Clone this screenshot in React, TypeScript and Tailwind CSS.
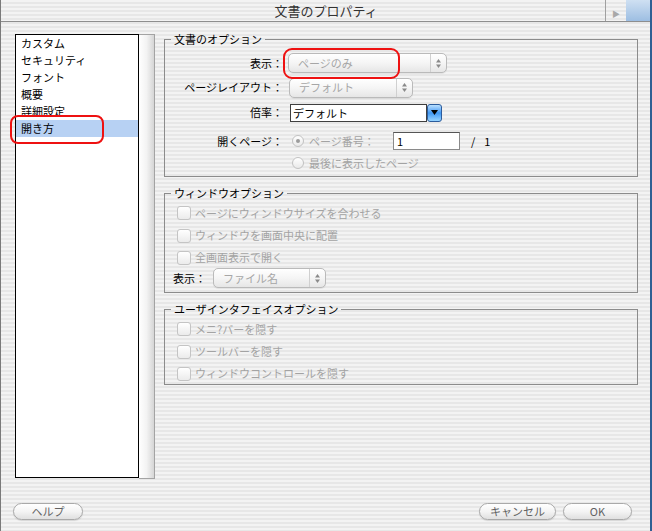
import React from "react";

const STRIPE =
  "bg-[repeating-linear-gradient(180deg,#f3f3f3_0px,#f3f3f3_2px,#e7e7e7_2px,#e7e7e7_4px)]";

function UpDown() {
  return (
    <svg width="7" height="11" viewBox="0 0 7 11">
      <path d="M3.5 1 L6 4.5 H1 Z" fill="#8a8a8a" />
      <path d="M3.5 10 L6 6.5 H1 Z" fill="#8a8a8a" />
    </svg>
  );
}

function Popup({ className, text }: { className: string; text: string }) {
  return (
    <div
      className={`${className} h-[20px] rounded-[5px] border border-[#bababa] bg-gradient-to-b from-[#ffffff] via-[#f5f5f5] to-[#e6e6e6] flex items-center shadow-[0_1px_0_rgba(0,0,0,0.06)]`}
    >
      <span className="flex-1 pl-[9px] text-[#a6a6a6] leading-none">{text}</span>
      <span className="w-[16px] h-full border-l border-[#d0d0d0] flex items-center justify-center">
        <UpDown />
      </span>
    </div>
  );
}

function Check({ label }: { label: string }) {
  return (
    <div className="flex items-center">
      <span className="w-[14px] h-[14px] rounded-[3px] border border-[#c4c4c4] bg-gradient-to-b from-white to-[#ebebeb]" />
      <span className="ml-[4px] text-[#a3a3a3]">{label}</span>
    </div>
  );
}

function Radio({ on }: { on?: boolean }) {
  return (
    <span className="w-[12px] h-[12px] rounded-full border border-[#c2c2c2] bg-gradient-to-b from-white to-[#e9e9e9] flex items-center justify-center shrink-0">
      {on && <span className="w-[4px] h-[4px] rounded-full bg-[#9c9c9c]" />}
    </span>
  );
}

function Btn({ className, text }: { className: string; text: string }) {
  return (
    <div
      className={`${className} h-[17px] rounded-full border border-[#a9a9a9] bg-gradient-to-b from-white via-[#f4f4f4] to-[#e0e0e0] flex items-center justify-center text-[#626262] text-[11px] shadow-[0_1px_1px_rgba(0,0,0,0.12)]`}
    >
      {text}
    </div>
  );
}

const items = ["カスタム", "セキュリティ", "フォント", "概要", "詳細設定", "開き方"];

export default function App() {
  return (
    <div className="relative w-[652px] h-[531px] overflow-hidden bg-[#2f5f93] font-['Noto_Sans_CJK_JP','Noto_Sans',sans-serif] text-[11px] text-black">
      <div className={`w-[650px] h-full flex flex-col border-l border-[#7a7a7a] ${STRIPE}`}>
        {/* title bar */}
        <div className="h-[22px] flex border-b border-[#8e8e8e]">
          <div className="flex-1 border-r border-[#a0a0a0] flex items-center justify-center pl-[46px] text-[13px] text-[#333] leading-none">
            文書のプロパティ
          </div>
          <div className="w-[20px] flex items-end justify-center pb-[3px] text-[8px] text-[#a8a8a8] leading-none">
            ▶
          </div>
          <div className="w-[24px] bg-gradient-to-b from-[#cfe0f2] to-[#9dbee2]" />
        </div>

        {/* body */}
        <div className="flex-1 flex flex-col pl-[14px] pr-[12px] pt-[12px]">
          <div className="h-[444px] flex">
            <div className="w-[124px] h-full border border-black bg-white">
              {items.map((t, i) => (
                <div
                  key={t}
                  className={`h-[17px] leading-[17px] pl-[5px] ${i === 5 ? "bg-[#b7d1f3]" : ""}`}
                >
                  {t}
                </div>
              ))}
            </div>
            <div className="w-[16px] h-[445px] border-t border-r border-b border-[#a3a3a3] bg-gradient-to-r from-white via-[#f3f3f3] to-[#d6d6d6]" />

            <div className="flex-1 ml-[9px] flex flex-col">
              {/* group 1 */}
              <fieldset className="border border-[#8c8c8c] pt-[7px] pb-[7px] min-w-0">
                <legend className="ml-[6px] px-[3px] leading-[10px]">文書のオプション</legend>
                <div className="h-[24px] flex items-center">
                  <span className="w-[118px] text-right">表示：</span>
                  <Popup className="ml-[5px] w-[159px]" text="ページのみ" />
                </div>
                <div className="h-[25px] flex items-center">
                  <span className="w-[118px] text-right">ページレイアウト：</span>
                  <Popup className="ml-[6px] w-[124px]" text="デフォルト" />
                </div>
                <div className="h-[25px] flex items-center">
                  <span className="w-[118px] text-right">倍率：</span>
                  <div className="ml-[7px] flex items-center">
                    <div className="w-[137px] h-[18px] border border-[#3f3f3f] bg-white pl-[2px] leading-[16px]">
                      デフォルト
                    </div>
                    <div className="w-[15px] h-[18px] rounded-[3px] border border-[#2c5c9c] bg-gradient-to-b from-[#b9e0ff] via-[#3f97f2] to-[#97d4ff] flex items-center justify-center">
                      <svg width="7" height="5" viewBox="0 0 7 5">
                        <path d="M0 0 H7 L3.5 5 Z" fill="#000" />
                      </svg>
                    </div>
                  </div>
                </div>
                <div className="h-[32px] flex items-center">
                  <span className="w-[118px] text-right">開くページ：</span>
                  <div className="ml-[5px] w-[105px] flex items-center">
                    <span className="ml-[4px]" />
                    <Radio on />
                    <span className="ml-[5px] text-[#a3a3a3]">ページ番号：</span>
                  </div>
                  <div className="w-[67px] h-[18px] border border-[#8a8a8a] border-t-[#555] bg-white pl-[3px] leading-[16px]">
                    1
                  </div>
                  <span className="ml-[11px]">/</span>
                  <span className="ml-[9px]">1</span>
                </div>
                <div className="h-[12px] flex items-center">
                  <span className="w-[118px]" />
                  <div className="ml-[5px] flex items-center">
                    <span className="ml-[4px]" />
                    <Radio />
                    <span className="ml-[5px] text-[#a3a3a3]">最後に表示したページ</span>
                  </div>
                </div>
              </fieldset>

              {/* group 2 */}
              <fieldset className="mt-[11px] border border-[#8c8c8c] pt-[4px] pb-[4px] min-w-0">
                <legend className="ml-[6px] px-[3px] leading-[10px]">ウィンドウオプション</legend>
                <div className="h-[22px] flex items-center pl-[12px]">
                  <Check label="ページにウィンドウサイズを合わせる" />
                </div>
                <div className="h-[23px] flex items-center pl-[12px]">
                  <Check label="ウィンドウを画面中央に配置" />
                </div>
                <div className="h-[21px] flex items-center pl-[12px]">
                  <Check label="全画面表示で開く" />
                </div>
                <div className="h-[20px] flex items-center pl-[8px]">
                  <span>表示：</span>
                  <Popup className="ml-[7px] w-[113px]" text="ファイル名" />
                </div>
              </fieldset>

              {/* group 3 */}
              <fieldset className="mt-[11px] border border-[#8c8c8c] pt-[4px] min-w-0">
                <legend className="ml-[6px] px-[3px] leading-[10px]">ユーザインタフェイスオプション</legend>
                <div className="h-[22px] flex items-center pl-[12px]">
                  <Check label="メニ?バーを隠す" />
                </div>
                <div className="h-[23px] flex items-center pl-[12px]">
                  <Check label="ツールバーを隠す" />
                </div>
                <div className="h-[21px] flex items-center pl-[12px]">
                  <Check label="ウィンドウコントロールを隠す" />
                </div>
              </fieldset>
            </div>
          </div>

          {/* buttons */}
          <div className="mt-[25px] h-[17px] flex items-center pr-[6px]">
            <Btn className="-ml-[2px] w-[70px]" text="ヘルプ" />
            <div className="flex-1" />
            <Btn className="w-[77px]" text="キャンセル" />
            <Btn className="ml-[7px] w-[69px]" text="OK" />
          </div>
        </div>
      </div>

      {/* red annotation marks */}
      <div className="absolute left-[10px] top-[115px] w-[94px] h-[29px] border-2 border-[#ee1111] rounded-[8px]" />
      <div className="absolute left-[283px] top-[48px] w-[117px] h-[31px] border-2 border-[#ee1111] rounded-[9px]" />
    </div>
  );
}
